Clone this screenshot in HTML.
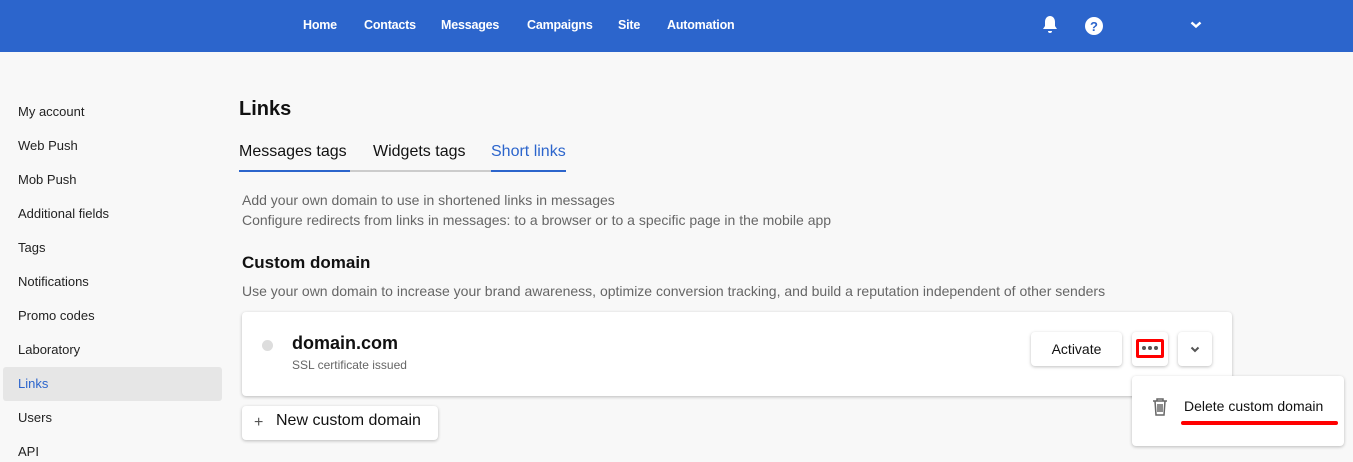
<!DOCTYPE html>
<html><head><style>
*{margin:0;padding:0;box-sizing:border-box}
body{width:1353px;height:462px;background:#f8f8f8;font-family:"Liberation Sans",sans-serif;position:relative;overflow:hidden;color:#111}
.top{position:absolute;left:0;top:0;width:1353px;height:52px;background:#2c65cc}
.nav{position:absolute;top:18px;color:#fff;font-size:12.5px;font-weight:bold;letter-spacing:-0.2px}
.abs{position:absolute}
.side{position:absolute;left:18px;font-size:13px;color:#222}
.card{position:absolute;background:#fff;border-radius:4px;box-shadow:0 1px 3px rgba(0,0,0,.25)}
</style></head><body>
<div class="top"></div>
<div class="nav" style="left:303px">Home</div>
<div class="nav" style="left:364px">Contacts</div>
<div class="nav" style="left:441px">Messages</div>
<div class="nav" style="left:527px">Campaigns</div>
<div class="nav" style="left:618px">Site</div>
<div class="nav" style="left:667px">Automation</div>
<svg class="abs" style="left:1041px;top:15px" width="18" height="20" viewBox="0 0 18 20"><path d="M9 1c-3 0-5 2.5-5 6v4l-2 3h14l-2-3V7c0-3.5-2-6-5-6z" fill="#fff"/><path d="M7 16a2 2 0 0 0 4 0" fill="#fff"/></svg>
<svg class="abs" style="left:1085px;top:17px" width="18" height="18" viewBox="0 0 18 18"><circle cx="9" cy="9" r="9" fill="#fff"/><text x="9" y="14" font-size="13" font-weight="bold" text-anchor="middle" fill="#2c65cc" font-family="Liberation Sans">?</text></svg>
<svg class="abs" style="left:1190px;top:21px" width="12" height="8" viewBox="0 0 12 8"><path d="M1.5 1.5l4.5 4 4.5-4" stroke="#fff" stroke-width="2.5" fill="none"/></svg>

<div class="abs" style="left:3px;top:367px;width:219px;height:34px;background:#e6e6e6;border-radius:3px"></div>
<div class="side" style="top:104px">My account</div>
<div class="side" style="top:138px">Web Push</div>
<div class="side" style="top:172px">Mob Push</div>
<div class="side" style="top:206px">Additional fields</div>
<div class="side" style="top:240px">Tags</div>
<div class="side" style="top:274px">Notifications</div>
<div class="side" style="top:308px">Promo codes</div>
<div class="side" style="top:342px">Laboratory</div>
<div class="side" style="top:376px;color:#2c65cc">Links</div>
<div class="side" style="top:410px">Users</div>
<div class="side" style="top:444px">API</div>

<div class="abs" style="left:239px;top:98px;font-size:20px;font-weight:bold">Links</div>
<div class="abs" style="left:239px;top:143px;font-size:16px">Messages tags</div>
<div class="abs" style="left:373px;top:143px;font-size:16px">Widgets tags</div>
<div class="abs" style="left:491px;top:143px;font-size:16px;color:#2c65cc">Short links</div>
<div class="abs" style="left:239px;top:170px;width:327px;height:2px;background:#ccc"></div>
<div class="abs" style="left:239px;top:170px;width:111px;height:2px;background:#2c65cc"></div>
<div class="abs" style="left:491px;top:170px;width:75px;height:2px;background:#2c65cc"></div>
<div class="abs" style="left:242px;top:190px;font-size:14px;color:#666;line-height:20px">Add your own domain to use in shortened links in messages<br>Configure redirects from links in messages: to a browser or to a specific page in the mobile app</div>
<div class="abs" style="left:242px;top:253px;font-size:17px;font-weight:bold">Custom domain</div>
<div class="abs" style="left:242px;top:283px;font-size:14px;color:#666">Use your own domain to increase your brand awareness, optimize conversion tracking, and build a reputation independent of other senders</div>

<div class="card" style="left:242px;top:312px;width:990px;height:84px"></div>
<div class="abs" style="left:262px;top:340px;width:11px;height:11px;border-radius:50%;background:#ddd"></div>
<div class="abs" style="left:292px;top:333px;font-size:18px;font-weight:bold">domain.com</div>
<div class="abs" style="left:292px;top:358px;font-size:12px;color:#666">SSL certificate issued</div>
<div class="card" style="left:1031px;top:332px;width:91px;height:34px;font-size:14px;text-align:center;line-height:34px">Activate</div>
<div class="card" style="left:1132px;top:332px;width:36px;height:34px"></div>
<div class="abs" style="left:1136px;top:339px;width:28px;height:19px;border:3px solid #f00;border-radius:2px"></div>
<svg class="abs" style="left:1141px;top:345px" width="18" height="6" viewBox="0 0 18 6"><circle cx="3" cy="3" r="2" fill="#555"/><circle cx="9" cy="3" r="2" fill="#555"/><circle cx="15" cy="3" r="2" fill="#555"/></svg>
<div class="card" style="left:1178px;top:332px;width:34px;height:34px"></div>
<svg class="abs" style="left:1190px;top:346px" width="10" height="7" viewBox="0 0 10 7"><path d="M1.5 1.5l3.5 3.5 3.5-3.5" stroke="#555" stroke-width="2" fill="none"/></svg>

<div class="card" style="left:242px;top:406px;width:196px;height:34px"></div>
<div class="abs" style="left:254px;top:414px;font-size:16px;color:#555">+</div>
<div class="abs" style="left:276px;top:412px;font-size:16px">New custom domain</div>

<div class="card" style="left:1132px;top:376px;width:212px;height:70px"></div>
<svg class="abs" style="left:1152px;top:398px" width="16" height="18" viewBox="0 0 16 18"><path d="M1 3h14M5 3V1h6v2M3 3l1 14h8l1-14M6 6v8M8 6v8M10 6v8" stroke="#666" stroke-width="1.5" fill="none"/></svg>
<div class="abs" style="left:1184px;top:398px;font-size:14px">Delete custom domain</div>
<div class="abs" style="left:1181px;top:421px;width:157px;height:4px;background:#f00;border-radius:2px"></div>
</body></html>
